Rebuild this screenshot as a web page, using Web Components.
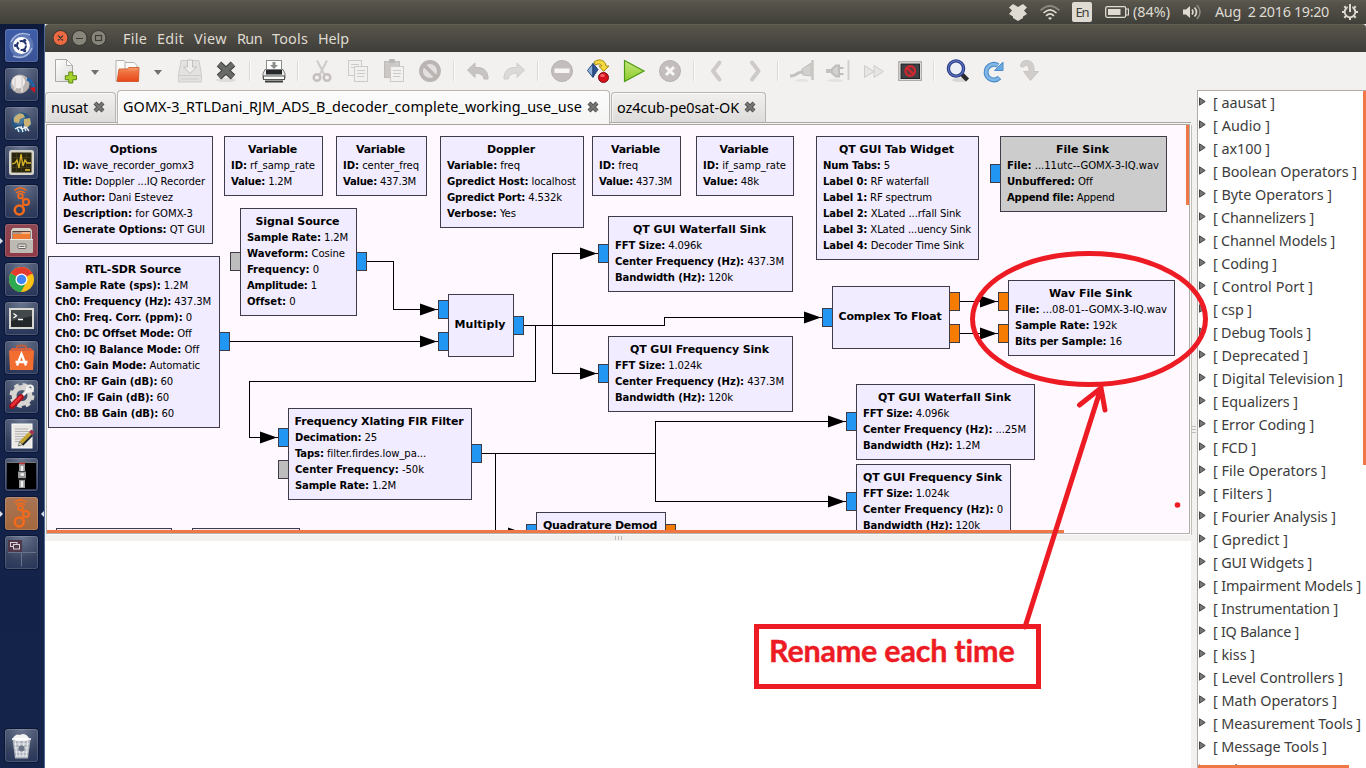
<!DOCTYPE html>
<html lang="en">
<head>
<meta charset="utf-8">
<title>GNU Radio Companion</title>
<style>
html,body{margin:0;height:100%;overflow:hidden}
body{font-family:"Noto Sans","Open Sans",sans-serif;font-size:14.4px;background:#f2f1f0}
</style>
</head>
<body>
<unity-desktop></unity-desktop>
<script>
const define = (name, css, html, after) => customElements.define(name, class extends HTMLElement {
  connectedCallback() {
    if (this.shadowRoot) return;
    const root = this.attachShadow({ mode: 'open' });
    root.innerHTML = `<style>${css}</style>` + (typeof html === 'function' ? html(this) : html);
    if (after) after(this, root);
  }
});

/* Text run tracked to a fixed width. */
define('fit-text', ':host{display:inline-block;white-space:pre}', '<slot></slot>', el => {
  const w = +el.getAttribute('w');
  if (!w) return;
  const n = el.textContent.length;
  el.style.letterSpacing = (w - el.getBoundingClientRect().width) / n + 'px';
});

/* ---------- top panel ---------- */
define('top-panel', `
:host{display:flex;height:24px;box-sizing:border-box;align-items:center;padding-left:1008px;color:#dfdbd2;
background:linear-gradient(#5e5b50,#57544b 10%,#403f39)}
svg{display:block;flex:none}
.en{width:20px;height:20px;border-radius:2px;background:#dfdbd2;color:#403f39;display:flex;align-items:center;justify-content:center;font-size:13px;margin:0 13px 0 12px}
fit-text{line-height:24px}`, `
<svg width="20" height="20" viewBox="0 0 20 20" fill="#dfdbd2"><path d="M5 2 10 5 15 2 19 5.500 16 8.500 19 12 15 14.500V16L10 19 5 16V14.500L1 12 4 8.500 1 5.500Z"/></svg>
<svg width="20" height="20" viewBox="0 0 20 20" style="margin-left:12px" fill="none" stroke="#dfdbd2" stroke-width="1.700"><path d="M.5 8.500Q10-.5 19.500 8.500" stroke="#8c897f"/><path d="M3.500 11Q10 4.500 16.500 11M6 13.800Q10 10 14 13.800"/><path d="M8 16Q10 14.500 12 16L10 18Z" fill="#dfdbd2" stroke="none"/></svg>
<span class="en"><fit-text w="13">En</fit-text></span>
<svg width="24" height="14" viewBox="0 0 24 14"><rect x=".7" y="1.700" width="20" height="10.600" rx="1.500" fill="none" stroke="#dfdbd2" stroke-width="1.300"/><rect x="3" y="4" width="12.500" height="6" fill="#dfdbd2"/><path d="M21 4h2.500v6H21" fill="none" stroke="#dfdbd2" stroke-width="1.200"/></svg>
<fit-text w="37" style="margin-left:4px">(84%)</fit-text>
<svg width="22" height="18" viewBox="0 0 22 18" style="margin-left:12px"><path d="M1 6.500h3L8 3v12L4 11.500H1Z" fill="#dfdbd2"/><path d="M10 6.500q2 2.500 0 5M12.500 4.500q4 4.500 0 9" stroke="#dfdbd2" stroke-width="1.600" fill="none"/><path d="M15 2q6 7 0 14" stroke="#8c897f" stroke-width="1.600" fill="none"/></svg>
<fit-text w="114" style="margin-left:11px">Aug  2 2016 19:20</fit-text>
<svg width="18" height="18" viewBox="0 0 18 18" style="margin-left:12px" fill="none" stroke="#dfdbd2"><circle cx="9" cy="9" r="5.300" stroke-width="1.800"/><path d="M9 1v8" stroke="#4a4841" stroke-width="4.500"/><path d="M9 1v8M1 9h2.500M14.500 9H17M9 14.500V17M3.300 3.300 5 5M14.700 3.300 13 5M3.300 14.700 5 13M14.700 14.700 13 13" stroke-width="2"/></svg>`);

/* ---------- launcher ---------- */
const hoops = c => `<g fill="none" stroke="${c}"><path d="M9.500 5.500Q15.500 0 21.500 5.500M11 8q4.500-3.500 9 0" stroke-width="1.500"/><circle cx="15.500" cy="11" r="2.300" stroke-width="1.800"/><circle cx="21" cy="17" r="3" stroke-width="2"/><circle cx="14.300" cy="25" r="4.500" stroke-width="2.600"/><path d="M17 13l1.500 2M18.500 19.500 17 21.500" stroke-width="1.600"/></g>`;
const launch = {
  dash: `<circle cx="16.500" cy="16.500" r="12" fill="#7c93c6" opacity=".55"/><path d="M8 27q13 5 19-8M25 6Q12 1 6 13" stroke="#a9b9df" stroke-width="1.500" fill="none"/><circle cx="16.500" cy="16.500" r="8.500" fill="#fff"/><circle cx="16.500" cy="16.500" r="4.500" fill="none" stroke="#22356f" stroke-width="2" stroke-dasharray="7.900 1.500"/><g fill="#22356f"><circle cx="10.500" cy="16.500" r="1.600"/><circle cx="19.600" cy="11.300" r="1.600"/><circle cx="19.600" cy="21.700" r="1.600"/></g>`,
  ball: `<path d="M5 21Q5 9 15 8" stroke="#2b568f" fill="none" stroke-width="2"/><circle cx="15" cy="16" r="9.500" fill="#b9b4b2"/><circle cx="13.500" cy="14" r="6.500" fill="#efebea"/><path d="M17 8v16M10 10v12" stroke="#dcd8d6" stroke-width="2"/><path d="M22 11q6 2 7 10" stroke="#2362a5" stroke-width="3" fill="none"/><path d="M25 20l5-1v6Z" fill="#d8121b"/>`,
  globe: `<circle cx="16.500" cy="15.500" r="10" fill="#27557f"/><circle cx="14" cy="12" r="6" fill="#5d8fb8" opacity=".6"/><path d="M9 11q4-6 9-4l2 3-5 2-1 4-5-1ZM19 12l6-1 1 6-4 4-3-3Z" fill="#c9b273"/><path d="M10 22l4-2 3 2 4-2 3 4M12 20l2 5M19 19l2 5M16 19l2 6" stroke="#f5f5f5" stroke-width="1.300" fill="none"/>`,
  monitor: `<rect x="4" y="4" width="25" height="25" rx="2.500" fill="#d6d3c9"/><rect x="6.500" y="6.500" width="20" height="20" fill="#2a260e"/><path d="M6.500 11.500h20M6.500 16.500h20M6.500 21.500h20M11.500 6.500v20M16.500 6.500v20M21.500 6.500v20" stroke="#4c461c" stroke-width=".6"/><path d="M7 18l3-1 2-3 2 8 2-14 2 12 2-6 2 3h4" stroke="#d9b62b" fill="none" stroke-width="1.300"/><path d="M20 24h5" stroke="#b59b2a" stroke-width="2"/>`,
  radio: hoops('#f46a1b'),
  files: `<path d="M6 6.500 8 4h17l2 2.500V17H6Z" fill="#d5d1ca"/><rect x="7.500" y="7" width="18" height="9" fill="#5b4237"/><path d="M8 10h8l1-2h8v8H8Z" fill="#f07c34"/><path d="M8 9h17" stroke="#fbe9d8" stroke-width="1"/><rect x="5" y="15" width="23" height="14" rx="1" fill="#bdbab4"/><path d="M5 15.500h23" stroke="#e9e7e3"/><rect x="13" y="20" width="8" height="4.500" rx="1" fill="#efeeea" stroke="#66635e"/><path d="M14.500 22.300h5" stroke="#55524d"/>`,
  chrome: `<circle cx="16.500" cy="16.500" r="12.500" fill="#fbc116"/><path d="M16.500 16.500 5.700 10.200A12.500 12.500 0 0 1 27.300 10.200Z" fill="#e33b2e"/><path d="M16.500 10.300h10.800" stroke="#e33b2e" stroke-width="1.600"/><path d="M5.700 10.200A12.500 12.500 0 0 0 16 29l5.300-9.700-4.800-2.800Z" fill="#2da94f"/><circle cx="16.500" cy="16.500" r="6" fill="#fff"/><circle cx="16.500" cy="16.500" r="4.700" fill="#4286f5"/>`,
  term: `<rect x="4" y="6" width="25" height="21" fill="#d8d7d2"/><rect x="6" y="8" width="21" height="17" fill="#25282a"/><path d="M6 8h21v6L6 19Z" fill="#43484a"/><path d="M8.500 11.500l3 2.200-3 2.200M13 17.500h5" stroke="#fff" stroke-width="1.300" fill="none"/>`,
  store: `<path d="M12 8V5.500q4.500-2 9 0V8" stroke="#bd5d3e" stroke-width="2" fill="none"/><path d="M4 10 7 7h19l3 3Z" fill="#d65f3d"/><path d="M4 10h25l-1 19H5Z" fill="#f26d30"/><path d="M12 24.500 16.500 13 21 24.500M10.500 21H22.500" stroke="#fff" stroke-width="2.300" fill="none"/>`,
  gear: `<circle cx="17" cy="15.500" r="8" fill="none" stroke="#d8d6d2" stroke-width="5"/><circle cx="17" cy="15.500" r="11" fill="none" stroke="#d8d6d2" stroke-width="3" stroke-dasharray="4.600 4.100"/><path d="M15 18 25 8" stroke="#f2f1ee" stroke-width="3"/><circle cx="25" cy="8.500" r="3" fill="none" stroke="#f2f1ee" stroke-width="2"/><path d="M7 26 16 17" stroke="#a80e14" stroke-width="5.500" stroke-linecap="round"/><path d="M7 25.500 15.500 17" stroke="#e8303a" stroke-width="2.500" stroke-linecap="round"/>`,
  edit: `<rect x="7" y="5" width="20" height="24" fill="#e9e8e5" stroke="#fff"/><path d="M10 10h13M10 12.500h14M10 15h12M10 17.500h10M10 20h8M10 22.500h4" stroke="#aaa" stroke-width=".9"/><path d="M16 24 25.500 14.500" stroke="#c5a432" stroke-width="4.500"/><path d="M14.500 22.500l3 3-4 1.500Z" fill="#eee0c0" stroke="#333" stroke-width=".6"/><path d="M25.500 14.500 28 12" stroke="#a33652" stroke-width="4.500"/><path d="M17.500 26 27.500 16" stroke="#1f2a2c" stroke-width="1.800"/>`,
  strip: `<rect x="2" y="4" width="29" height="27" fill="#000"/><path d="M2 4.500h29" stroke="#777" stroke-width="1"/><path d="M14 6h6v7h-6ZM13 14h8v6h-8ZM14 22h6v8h-6Z" fill="#999"/><path d="M14 5.500h6" stroke="#b33" stroke-width="1.500"/><path d="M17 8v5M15.500 16.500h3.500M17 23v6" stroke="#eee" stroke-width="2.500"/><path d="M13 13.500h8M13 21h8" stroke="#444"/>`,
  work: `<path d="M16.500 2.500v28M3 16.500h28" stroke="#69728a" stroke-width="1"/><rect x="3" y="4" width="14" height="12" fill="#50384a"/><rect x="5.500" y="6.500" width="6.500" height="4" fill="#513b4a" stroke="#d8d4d8"/><rect x="8.500" y="8.500" width="6" height="4.500" fill="#513b4a" stroke="#d8d4d8"/>`,
  trash: `<path d="M7.500 10h18L23 29.500H10Z" fill="#aeb4bd"/><path d="M10 11l2 17M14 11l1 17M19 11l-1 17M23 11l-2 17M9 15h15M9.500 19h14M10 23h13M10.500 27h12" stroke="#eef0f3" stroke-width=".9"/><path d="M8 9q3-5 7-3 5-3 9 3l-2 3H11Z" fill="#f3f3f3"/><path d="M7 10h19" stroke="#fff" stroke-width="1.600"/><circle cx="16.500" cy="19.500" r="3" fill="#6d7686"/>`
};
define('launcher-tile', `
:host{display:block;height:33px;margin:0 6px 6px 5px;border-radius:3px;flex:none;box-sizing:border-box;position:relative;
background:var(--tile,radial-gradient(circle at 50% 0,#6b7690,#36425f 65%,#26345a));box-shadow:0 0 0 1px #0c1735 , inset 0 0 0 1px #ffffff26}
svg{display:block;width:33px;height:33px}
i{position:absolute;top:14px;left:-5px;border:3px solid transparent;border-left-color:#dce0ea;border-right:0}
i+i{left:36px;border:3px solid transparent;border-right-color:#dce0ea;border-left:0}`,
  el => `<svg viewBox="0 0 33 33">${launch[el.getAttribute('app')]}</svg>` + '<i></i>'.repeat(+el.getAttribute('pips') || 0));
define('unity-launcher', `
:host{display:flex;flex-direction:column;width:44px;box-sizing:border-box;padding-top:5px;background:linear-gradient(#0d1a3c,#142248 4%,#14234a);border-right:0}
.red{--tile:linear-gradient(#8e4653,#8f3b47)}.org{--tile:linear-gradient(#a87555,#a4673c)}.dash{--tile:linear-gradient(#3f5ea8,#3a5396)}
.end{margin-top:auto;margin-bottom:6px}`, `
<launcher-tile class="dash" app="dash"></launcher-tile><launcher-tile app="ball"></launcher-tile><launcher-tile app="globe"></launcher-tile>
<launcher-tile app="monitor"></launcher-tile><launcher-tile app="radio"></launcher-tile><launcher-tile class="red" app="files" pips="1"></launcher-tile>
<launcher-tile app="chrome"></launcher-tile><launcher-tile app="term"></launcher-tile><launcher-tile app="store"></launcher-tile>
<launcher-tile app="gear"></launcher-tile><launcher-tile app="edit"></launcher-tile><launcher-tile app="strip"></launcher-tile>
<launcher-tile class="org" app="radio" pips="2"></launcher-tile><launcher-tile app="work"></launcher-tile>
<launcher-tile class="end" app="trash"></launcher-tile>`);

/* ---------- title bar ---------- */
define('title-bar', `
:host{display:flex;height:28px;align-items:center;border-radius:4px 4px 0 0;background:linear-gradient(#6a675b,#595649 4%,#56534a 12%,#3e3d38);color:#dfdbd2;padding-left:8px;box-sizing:border-box}
svg{display:block;margin-right:13px}
nav{display:flex;gap:10px;padding-top:2px}fit-text{line-height:24px}`, `
<svg width="57" height="18" viewBox="0 0 57 18"><g stroke="#33322d"><circle cx="7.500" cy="9" r="7.500" fill="#ee6a42"/><circle cx="26.500" cy="9" r="7.500" fill="#88857b"/><circle cx="45.500" cy="9" r="7.500" fill="#88857b"/></g><g stroke="#3c3b36" stroke-width="1.200" fill="none"><path d="M5 6.500l5 5m0-5-5 5M23 9.500h7"/><rect x="42.500" y="6.500" width="6" height="5"/></g></svg>
<nav><fit-text w="24">File</fit-text><fit-text w="27">Edit</fit-text><fit-text w="33">View</fit-text><fit-text w="25">Run</fit-text><fit-text w="36">Tools</fit-text><fit-text w="31">Help</fit-text></nav>`);

/* ---------- toolbar ---------- */
const glyphs = {
  new: `<defs><linearGradient id="a" x2="1" y2="1"><stop stop-color="#fff"/><stop offset="1" stop-color="#d9d9d7"/></linearGradient></defs><path d="M1.500.5h11l6 6v16h-17Z" fill="url(#a)" stroke="#a9aaa6"/><path d="M12.500.5v6h6Z" fill="#fff" stroke="#b4b5b1"/><path d="M14.800 13h4v3.700h3.700v4h-3.700v3.300h-4v-3.300h-3.500v-4h3.500Z" fill="#a5d12f" stroke="#5d8a12"/>`,
  open: `<path d="M1 1.500h8l3 3V22H1Z" fill="#fafaf9" stroke="#b3b1ae"/><path d="M10 3.500h9l3 3V14H10Z" fill="#fafaf9" stroke="#b3b1ae"/><defs><linearGradient id="a" x2="0" y2="1"><stop stop-color="#f9a177"/><stop offset=".3" stop-color="#ef7440"/><stop offset="1" stop-color="#e8481a"/></linearGradient></defs><path d="M4 10h8l2-1.500h10L23.500 22.500H2Z" fill="url(#a)" stroke="#cf4c1c" stroke-width=".8"/>`,
  save: `<path d="M3 1.500h18L23.500 16v7H.500v-7Z" fill="#e3e2e0" stroke="#cfcdcb"/><path d="M.5 16.500h23" stroke="#cfcdcb"/><path d="M9.500 1h5v7h4L12 14.500 5.500 8h4Z" fill="#efeeed" stroke="#c3c1bf"/><path d="M3 20h18" stroke="#cfcdcb"/>`,
  close: `<ellipse cx="12" cy="21" rx="10" ry="2" fill="#dddcda"/><path d="M5 5 19 18M19 5 5 18" stroke="#3f403e" stroke-width="6.500"/><path d="M5 5 19 18M19 5 5 18" stroke="#686a67" stroke-width="4.500"/>`,
  print: `<rect x="4.500" y="1.500" width="15" height="11" fill="#fff" stroke="#8b8d89"/><path d="M10.500 3h3v3h2.500L12 10 8 6h2.500Z" fill="#8b8d8d"/><path d="M3 10.500h18l2 4v5H1v-5Z" fill="#e9e9e7" stroke="#7a7b78"/><rect x="4" y="11" width="16" height="4.500" fill="#26292b"/><rect x="1.500" y="17" width="21" height="3.500" fill="#fafafa" stroke="#555753"/><path d="M3 22.500h18" stroke="#3b3d3a" stroke-width="2"/>`,
  cut: `<path d="M7 1.500 14.500 16M17 1.500 9.500 16" stroke="#cfcdcc" stroke-width="2.200"/><circle cx="7" cy="18.500" r="3.300" fill="none" stroke="#c5bfbe" stroke-width="2.500"/><circle cx="17" cy="18.500" r="3.300" fill="none" stroke="#c5bfbe" stroke-width="2.500"/>`,
  copy: `<g fill="#f1f0ef" stroke="#cdcbc9"><rect x="2.500" y="1.500" width="13" height="15"/><rect x="8.500" y="7.500" width="13" height="15"/></g><path d="M5 5.500h8M5 8.500h3M11 11.500h8M11 14.500h8M11 17.500h7" stroke="#cdcbc9"/>`,
  paste: `<rect x="2.500" y="2.500" width="15" height="16" fill="#cbc8c6" stroke="#bfbcba"/><rect x="7" y="0" width="6" height="4" rx="1" fill="#b9b7b5"/><rect x="8.500" y="7.500" width="13" height="15" fill="#f1f0ef" stroke="#cdcbc9"/><path d="M11 11.500h8M11 14.500h8M11 17.500h7" stroke="#cdcbc9"/>`,
  ban: `<circle cx="12" cy="12" r="9" fill="#e3e0df" stroke="#bab4b3" stroke-width="3.800"/><path d="M6 6 18 18" stroke="#bab4b3" stroke-width="3.800"/>`,
  undo: `<path d="M9 4v4.500q12-1 13 9.500V20h-4q-1-6-9-6v4.500L1.500 11Z" fill="#c8c4c3" stroke="#bfbab9"/>`,
  redo: `<path d="M15 4v4.500Q3 7.500 2 18v2h4q1-6 9-6v4.500L22.500 11Z" fill="#dcdad8" stroke="#cfcccb"/>`,
  minus: `<circle cx="12" cy="12" r="10.500" fill="#c3bebd" stroke="#b7b2b1"/><rect x="4.500" y="9.500" width="15" height="4.500" fill="#f7f6f5"/>`,
  gen: `<path d="M1.500 11.500 7 4.500v14Z" fill="#8fb0d9" stroke="#274a7a"/><path d="M7 4.500 12 10.500 7 18Z" fill="#2f5796" stroke="#1e3c6e"/><path d="M8 3Q13-1 18 2.500q2 2 2 4.500h3L17.500 12.500 13 7h3Q14 3.500 9.500 6Z" fill="#f4d93d" stroke="#a78a12"/><circle cx="17.500" cy="18.500" r="5" fill="#d8101c" stroke="#7c0a10"/><ellipse cx="16.500" cy="16.500" rx="2.500" ry="1.500" fill="#f3636a"/>`,
  play: `<defs><linearGradient id="a" x2="0" y2="1"><stop stop-color="#c5e67c"/><stop offset="1" stop-color="#8ccb28"/></linearGradient></defs><path d="M2.500 1.500 22 12 2.500 22.500Z" fill="url(#a)" stroke="#4e9a14" stroke-width="1.200"/>`,
  kill: `<circle cx="12" cy="12" r="10.500" fill="#c3bebd" stroke="#b7b2b1"/><path d="M8 8l8 8m0-8-8 8" stroke="#f7f6f5" stroke-width="3"/>`,
  back: `<path d="M13.500 3.500 7 12l6.500 8.500" fill="none" stroke="#cdcac8" stroke-width="4" stroke-linecap="round" stroke-linejoin="round"/>`,
  fwd: `<path d="M10 3.500 16.500 12 10 20.500" fill="none" stroke="#cdcac8" stroke-width="4" stroke-linecap="round" stroke-linejoin="round"/>`,
  plug: `<path d="M0 17q5 0 8-3l7-2" stroke="#c4c1bf" stroke-width="3" fill="none"/><path d="M12 10l9-6v13l-8-1Z" fill="#d2d0ce" stroke="#c0bdbb"/><path d="M22.500 1v20" stroke="#c7c4c2" stroke-width="2.500"/><ellipse cx="12" cy="21.500" rx="7" ry="1.500" fill="#e5e3e1"/>`,
  unplug: `<path d="M0 12h7" stroke="#c4c1bf" stroke-width="4"/><path d="M6 10l4-3.500h3v11h-3L6 14ZM13 9h4.500M13 15h4.500" fill="#d2d0ce" stroke="#c0bdbb" stroke-width="2"/><path d="M22.500 1v20" stroke="#d2d0ce" stroke-width="2"/><ellipse cx="9" cy="21.500" rx="8" ry="1.500" fill="#e3e1df"/>`,
  skip: `<path d="M2.500 6.500 12 12.500 2.500 18.500ZM12 6.500 21.500 12.500 12 18.500Z" fill="#e6e5e3" stroke="#cfcdcb"/>`,
  scr: `<rect x=".8" y="2.800" width="22.500" height="18.500" fill="#f4f4f3" stroke="#aaa8a6" stroke-width="1.300"/><rect x="3" y="5" width="18.500" height="14.500" fill="#3b4144" stroke="#222"/><circle cx="12.200" cy="12" r="4.800" fill="#60383c" stroke="#d22730" stroke-width="2.200"/><path d="M9 8.800l6.500 6.500" stroke="#d22730" stroke-width="2.200"/>`,
  find: `<ellipse cx="14" cy="21" rx="8" ry="2" fill="#d8d7d6"/><path d="M16 15.500l5.500 5.500" stroke="#2b2a2a" stroke-width="4.500"/><circle cx="10" cy="9.500" r="7.600" fill="#eceff5" stroke="#2a3c86" stroke-width="3.400"/><circle cx="10" cy="9.500" r="7.600" fill="none" stroke="#5d74c2" stroke-width="1.200"/>`,
  reload: `<path d="M17.500 18.500A7.800 7.800 0 1 1 16 6.500" fill="none" stroke="#4a8cc9" stroke-width="5"/><path d="M12.500 11.500h8.500V3Z" fill="#6ca9de" stroke="#4a8cc9"/><path d="M17 19A7.800 7.800 0 1 1 16 6.500" fill="none" stroke="#82b6e4" stroke-width="2.800"/>`,
  down: `<path d="M2.500 7.500Q3 1 9 1.500q7 .5 7 8.500v2.500h4.500L12.500 21.500 5.500 12.500H11V10q0-4-3-4-2 0-2 2Z" fill="#d0cdcb" stroke="#c8c5c3"/>`
};
define('tool-icon', ':host{display:flex;width:36px;height:38px;align-items:center;justify-content:center;flex:none}svg{display:block;overflow:visible}',
  el => `<svg width="24" height="24" viewBox="0 0 24 24">${glyphs[el.getAttribute('name')]}</svg>`);
define('tool-bar', `
:host{display:flex;height:38px;align-items:center;padding-left:3px;background:#f2f1f0}
hr{border:0;width:1px;height:20px;background:#dcdad8;margin:0 6px 0 5px;box-shadow:1px 0 #fbfbfa;flex:none}
b{width:0;height:0;border:4px solid transparent;border-top:5px solid #70706d;border-bottom:0;margin:2px 10px 0 7px;flex:none}
b.w{margin:2px 10px 0 9px}`,
  'new,>,open,>>,save,close,|,print,|,cut,copy,paste,ban,|,undo,redo,|,minus,gen,play,kill,|,back,fwd,|,plug,unplug,skip,scr,|,find,reload,down'
    .split(',').map(n => n === '|' ? '<hr>' : n === '>' ? '<b></b>' : n === '>>' ? '<b class="w"></b>' : `<tool-icon name="${n}"></tool-icon>`).join(''));

/* ---------- notebook tabs ---------- */
define('doc-tab', `
:host{display:flex;box-sizing:border-box;align-items:center;gap:4px;height:31px;border:1px solid #b9b5b1;border-bottom-color:#aeaaa6;border-radius:4px 4px 0 0;background:linear-gradient(#f1f0ef,#dedcda);color:#000;padding:0 0 1px 5px;margin-top:2px;box-shadow:inset 1px 1px #fff9}
:host([active]){height:34px;margin-top:0;background:linear-gradient(#fbfbfb,#f6f5f4);border-bottom:0;padding-bottom:2px}
svg{display:block;flex:none}`, `
<slot></slot><svg width="14" height="14" viewBox="0 0 14 14"><path d="M3 3l8 8m0-8-8 8" stroke="#555653" stroke-width="4.200"/><path d="M3 3l8 8m0-8-8 8" stroke="#777875" stroke-width="2"/></svg>`);
define('tab-strip', `:host{display:flex;height:34px;gap:1px;align-items:flex-start;background:linear-gradient(#f2f1f0 32px,#a9a5a1 32px,#a9a5a1 33px,#f6f5f4 33px)}`, `
<doc-tab style="width:71px"><fit-text w="37">nusat</fit-text></doc-tab>
<doc-tab active style="width:493px"><fit-text w="459">GOMX-3_RTLDani_RJM_ADS_B_decoder_complete_working_use_use</fit-text></doc-tab>
<doc-tab style="width:155px"><fit-text w="122">oz4cub-pe0sat-OK</fit-text></doc-tab>`);

/* ---------- flow graph ---------- */
define('graph-block', `
:host{position:absolute;box-sizing:border-box;border:1px solid #3f3c48;background:#f1ecff;color:#000;padding:5px 6px 0;display:flex;flex-direction:column;font:11.200px/16px "DejaVu Sans Condensed","DejaVu Sans",sans-serif;font-stretch:condensed}
:host([off]){background:#ccc}
h4{margin:0 0 0 -2px;font:bold 11px/16px "DejaVu Sans",sans-serif;height:16px;text-align:center;white-space:nowrap}
:host([solo]){justify-content:center;padding:0 6px 1px}
p{margin:0;height:16px;white-space:nowrap}`, el => {
  const [title, ...rows] = el.data.rows;
  const [t, tw] = title.split('~');
  return (t ? `<h4><fit-text w="${tw}">${t}</fit-text></h4>` : '') + rows.map(r => {
    const [k, v, w] = r.split('~');
    return `<p><fit-text w="${w}"><b>${k}:</b> ${v}</fit-text></p>`;
  }).join('');
});
const blocks = [
  [56,136,157,108,['Options~47.500','ID~wave_recorder_gomx3~131','Title~Doppler ...IQ Recorder~142','Author~Dani Estevez~110','Description~for GOMX-3~130','Generate Options~QT GUI~142']],
  [224,136,99,60,['Variable~49','ID~rf_samp_rate~84','Value~1.2M~61']],
  [336,136,91,60,['Variable~49','ID~center_freq~76','Value~437.3M~73']],
  [440,136,144,92,['Doppler~48','Variable~freq~73','Gpredict Host~localhost~129','Gpredict Port~4.532k~115','Verbose~Yes~69']],
  [592,136,89,60,['Variable~49','ID~freq~39','Value~437.3M~73']],
  [696,136,98,60,['Variable~49','ID~if_samp_rate~83','Value~48k~56']],
  [816,136,163,124,['QT GUI Tab Widget~115','Num Tabs~5~67','Label 0~RF waterfall~106','Label 1~RF spectrum~109','Label 2~XLated ...rfall Sink~138','Label 3~XLated ...uency Sink~148','Label 4~Decoder Time Sink~141']],
  [1000,136,167,76,['File Sink~53','File~...11utc--GOMX-3-IQ.wav~152','Unbuffered~Off~85','Append file~Append~107'],'off'],
  [240,208,117,108,['Signal Source~84','Sample Rate~1.2M~101','Waveform~Cosine~98','Frequency~0~72','Amplitude~1~70','Offset~0~48']],
  [48,256,172,172,['RTL-SDR Source~96','Sample Rate (sps)~1.2M~133','Ch0: Frequency (Hz)~437.3M~156','Ch0: Freq. Corr. (ppm)~0~137','Ch0: DC Offset Mode~Off~136','Ch0: IQ Balance Mode~Off~144','Ch0: Gain Mode~Automatic~145','Ch0: RF Gain (dB)~60~118','Ch0: IF Gain (dB)~60~114','Ch0: BB Gain (dB)~60~119']],
  [608,216,185,76,['QT GUI Waterfall Sink~133','FFT Size~4.096k~87','Center Frequency (Hz)~437.3M~169','Bandwidth (Hz)~120k~118']],
  [448,294,66,63,['Multiply~51'],'solo'],
  [608,336,185,76,['QT GUI Frequency Sink~139','FFT Size~1.024k~87','Center Frequency (Hz)~437.3M~169','Bandwidth (Hz)~120k~118']],
  [832,286,118,63,['Complex To Float~103'],'solo'],
  [1008,280,167,76,['Wav File Sink~83','File~...08-01--GOMX-3-IQ.wav~152','Sample Rate~192k~102','Bits per Sample~16~107']],
  [856,384,179,76,['QT GUI Waterfall Sink~133','FFT Size~4.096k~86','Center Frequency (Hz)~...25M~163','Bandwidth (Hz)~1.2M~117']],
  [856,464,155,76,['QT GUI Frequency Sink~139','FFT Size~1.024k~86','Center Frequency (Hz)~0~140','Bandwidth (Hz)~120k~117']],
  [288,408,184,92,['Frequency Xlating FIR Filter~169','Decimation~25~82','Taps~filter.firdes.low_pa...~131','Center Frequency~-50k~129','Sample Rate~1.2M~101']],
  [536,512,130,60,['Quadrature Demod~114']],
  [56,528,116,60,['']],
  [192,528,108,60,['']]
];
const B = '#2196f3', O = '#f57c00', G = '#bdbdbd';
const ports = [[230,252,G],[356,252,B],[219,332,B],[438,300,B],[438,332,B],[513,316,B],[598,244,B],[598,364,B],[278,428,B],[278,460,G],[471,444,B],[990,164,B],[822,308,B],[949,292,O],[949,324,O],[998,292,O],[998,324,O],[846,412,B],[846,492,B],[526,524,B],[665,524,O]];
const arrows = [[420,309],[420,341],[804,317],[260,437],[580,253],[580,373],[828,421],[828,501],[980,301],[980,333],[508,533]];
/* The canvas origin sits at (47,125) in the window, so the nodes are offset by it. */
define('flow-canvas', `
:host{display:block;position:relative;overflow:hidden;width:1142px;height:405px;background:#fff9ff}
svg{position:absolute;left:-47px;top:-125px;display:block}
.v{position:absolute;right:0;top:0;width:3px;height:80px;background:#f07746}`,
  `<svg width="1366" height="560" viewBox="0 0 1366 560"><g shape-rendering="crispEdges">
  ${ports.map(([x, y, c]) => `<rect x="${x + .5}" y="${y + .5}" width="10" height="18" fill="${c}" stroke="#3f3c48"/>`).join('')}</g>
  <g fill="none" stroke="#000" shape-rendering="crispEdges"><path d="M367 261.500H393.500V309.500H438M230 341.500H438M524 325.500H664.500V317.500H822M535.500 325.500V381.500H249.500V437.500H278M598 253.500H552.500V373.500H598M482 453.500H655.500M846 421.500H655.500V501.500H846M495.500 453.500V533.500H526M960 301.500H998M960 333.500H998"/></g>
  <g>${arrows.map(([x, y]) => `<path d="M${x} ${y - 5.5}v12l17-6Z"/>`).join('')}</g></svg><div class="v"></div>`,
  (el, root) => blocks.forEach(([x, y, w, h, rows, flag]) => {
    const b = document.createElement('graph-block');
    b.data = { rows };
    if (flag) b.setAttribute(flag, '');
    b.style.cssText = `left:${x - 47}px;top:${y - 125}px;width:${w}px;height:${h}px`;
    root.append(b);
  }));

define('graph-page', `
:host{display:flex;flex-direction:column;flex:1;min-height:0;background:#f2f1f0}
.frame{display:flex;flex-direction:column;width:1142px;margin-left:1px;border:1px solid #b5b1ad;border-top-color:#a9a5a1;border-right:1px solid #b0aca8;border-bottom-color:#b5b1ad;box-shadow:1px 1px #fbfbfa,2px 1px #c1bdb9}
.h{height:3px;background:linear-gradient(90deg,#f07746 1017px,#fff9ff 1017px)}
.grip{height:7px;display:flex;justify-content:center;align-items:center;gap:2px}
.grip i{width:1px;height:4px;background:#bdbab7}
.out{flex:1;background:#fff}`, `
<div class="frame"><flow-canvas></flow-canvas><div class="h"></div></div>
<div class="grip"><i></i><i></i><i></i></div><div class="out"></div>`);

/* ---------- block tree ---------- */
define('tree-row', `
:host{display:flex;align-items:center;height:23px;color:#3c3c3c;flex:none}
svg{display:block;margin:0 7px 0 1px;flex:none;position:relative;top:-1px}fit-text{line-height:22px}`,
  el => `<svg width="7" height="9" viewBox="0 0 7 9"><path d="M.5.800 6.200 4.500.5 8.200Z" fill="#777" stroke="#444"/></svg><fit-text w="${el.getAttribute('w')}">[ ${el.getAttribute('label')} ]</fit-text>`);
const cats = 'aausat 1274,Audio 1269,ax100 1269,Boolean Operators 1356,Byte Operators 1331,Channelizers 1313,Channel Models 1334,Coding 1276,Control Port 1312,csp 1251,Debug Tools 1310,Deprecated 1307,Digital Television 1342,Equalizers 1297,Error Coding 1313,FCD 1255,File Operators 1325,Filters 1271,Fourier Analysis 1335,Gpredict 1287,GUI Widgets 1311,Impairment Models 1360,Instrumentation 1337,IQ Balance 1298,kiss 1254,Level Controllers 1342,Math Operators 1336,Measurement Tools 1360,Message Tools 1326,Misc 1259';
define('block-tree', `
:host{display:grid;grid-template:1fr 3px/1fr 3px;width:169px;box-sizing:border-box;border-left:1px solid #b0aca8;border-top:1px solid #b0aca8;background:#fff;min-height:0;height:678px}
.rows{overflow:hidden;display:flex;flex-direction:column;min-height:0;width:165px}
.v{background:linear-gradient(#f07746 374px,#fff 374px)}
.h{grid-column:1/3;background:linear-gradient(90deg,#f07746 151px,#fff 151px)}`,
  `<div class="rows">${cats.split(',').map(c => { const m = c.match(/(.*) (\d+)$/); return `<tree-row label="${m[1]}" w="${m[2] - 1212}"></tree-row>`; }).join('')}</div><div class="v"></div><div class="h"></div>`);

/* ---------- drawn-over note ---------- */
define('red-note', `
:host{position:absolute;inset:0;pointer-events:none}
svg{position:absolute;inset:0}
div{position:absolute;left:754px;top:624px;width:287px;height:65px;box-sizing:border-box;border:5px solid #ed1c24;padding:0 0 14px 10px;display:flex;align-items:center;color:#ed1c24;font:bold 30.500px/40px Lato,sans-serif;-webkit-text-stroke:.4px #ed1c24}`, `
<svg width="1366" height="768" fill="none" stroke="#ed1c24" stroke-width="5" stroke-linecap="round"><ellipse cx="1089" cy="319" rx="116.500" ry="65.500"/><path d="M1025 627 1101 388M1079.500 405 1101 388 1105 410"/><circle cx="1177.500" cy="505" r="2.800" fill="#ed1c24" stroke="none"/></svg>
<div><fit-text w="246">Rename each time</fit-text></div>`);

define('app-window', `
:host{display:flex;flex-direction:column;flex:1;min-width:0;background:#f2f1f0}
.body{display:flex;flex:1;min-height:0}
.left{display:flex;flex-direction:column;width:1146px}
.bar{width:6px;display:flex;flex-direction:column;align-items:center;gap:2px;padding-top:336px;box-sizing:border-box}
.bar i{width:4px;height:1px;background:#bdbab7;flex:none}`, `
<title-bar></title-bar><tool-bar></tool-bar>
<div class="body"><div class="left"><tab-strip></tab-strip><graph-page></graph-page></div><div class="bar"><i></i><i></i><i></i></div><block-tree></block-tree></div>`);
define('unity-desktop', `
:host{display:flex;flex-direction:column;width:1366px;height:768px;position:relative;overflow:hidden}
.row{display:flex;flex:1;min-height:0;background:#14234a}
.edge{width:1px;background:#4b6a94}`, `
<top-panel></top-panel><div class="row"><unity-launcher></unity-launcher><div class="edge"></div><app-window></app-window></div><red-note></red-note>`);
</script>
</body>
</html>
